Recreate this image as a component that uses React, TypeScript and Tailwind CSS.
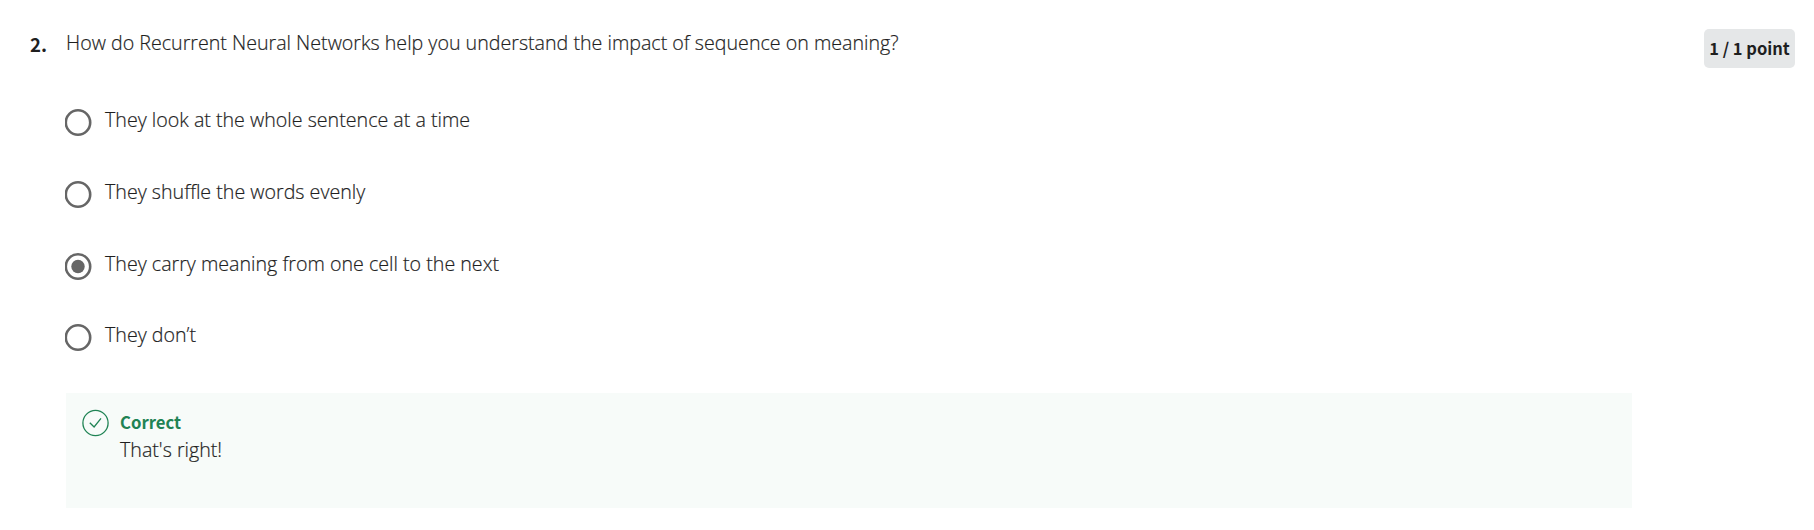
const options = [
  "They look at the whole sentence at a time",
  "They shuffle the words evenly",
  "They carry meaning from one cell to the next",
  "They don’t",
];

function Radio({ checked }: { checked: boolean }) {
  return (
    <svg className="mt-[4px] h-[27px] w-[27px] shrink-0" viewBox="0 0 27 27" fill="none">
      <circle cx="13" cy="13.5" r="12.2" stroke="#666666" strokeWidth="2.6" />
      {checked && <circle cx="13" cy="13.5" r="6.7" fill="#666666" />}
    </svg>
  );
}

export default function App() {
  return (
    <main className="flex h-[530px] w-full items-start bg-white font-['Open_Sans',sans-serif] text-[19.65px] font-light text-[#1f1f1f]">
      <div className="w-[66px] shrink-0 pt-[29px] pl-[30px] font-['Noto_Sans_CJK_SC',sans-serif] text-[18.6px] leading-[30px] font-bold">2.</div>
      <section className="w-[1566px] shrink-0">
        <h2 className="pt-[28px] leading-[30px] [-webkit-text-stroke:0.2px_#1f1f1f]">
          How do Recurrent Neural Networks help you understand the impact of sequence on meaning?
        </h2>
        <div className="-ml-[1.5px] mt-[47px] flex flex-col gap-[41.75px]">
          {options.map((option, i) => (
            <label key={option} className="flex h-[30px] items-start gap-[13.5px] leading-[30px]">
              <Radio checked={i === 2} />
              <span className="[-webkit-text-stroke:0.2px_#1f1f1f]">{option}</span>
            </label>
          ))}
        </div>
        <div className="mt-[42.75px] flex h-[115px] gap-[10px] bg-[#f7fbf9] pt-[16px] pl-[16px]">
          <svg className="-mt-[0.5px] h-[28px] w-[28px]" viewBox="0 0 28 28" fill="none" stroke="#1f8354" strokeWidth="1.3">
            <circle cx="13.5" cy="14" r="12.6" />
            <path d="M7.8 13.7 12.1 18 19 9.4" />
          </svg>
          <div className="-mt-px leading-[28px]">
            <p className="font-['Noto_Sans_CJK_SC',sans-serif] text-[16.7px] font-bold text-[#1f8354]">Correct</p>
            <p className="[-webkit-text-stroke:0.2px_#1f1f1f]">That's right!</p>
          </div>
        </div>
      </section>
      <div className="mt-[29px] mr-[19px] ml-auto flex h-[39px] w-[91px] items-center justify-center rounded-[5px] bg-[#e5e7e8] font-['Noto_Sans_CJK_SC',sans-serif] text-[16.5px] font-bold whitespace-nowrap">1 / 1 point</div>
    </main>
  );
}
